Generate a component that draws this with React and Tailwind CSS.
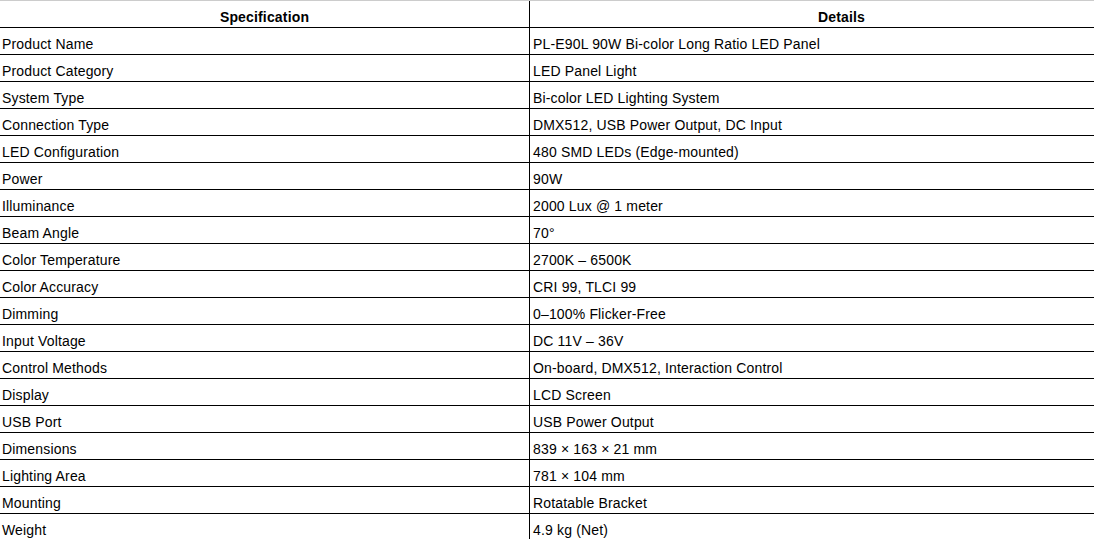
import React from 'react';

const specs = [
  ['Product Name', 'PL-E90L 90W Bi-color Long Ratio LED Panel'],
  ['Product Category', 'LED Panel Light'],
  ['System Type', 'Bi-color LED Lighting System'],
  ['Connection Type', 'DMX512, USB Power Output, DC Input'],
  ['LED Configuration', '480 SMD LEDs (Edge-mounted)'],
  ['Power', '90W'],
  ['Illuminance', '2000 Lux @ 1 meter'],
  ['Beam Angle', '70°'],
  ['Color Temperature', '2700K – 6500K'],
  ['Color Accuracy', 'CRI 99, TLCI 99'],
  ['Dimming', '0–100% Flicker-Free'],
  ['Input Voltage', 'DC 11V – 36V'],
  ['Control Methods', 'On-board, DMX512, Interaction Control'],
  ['Display', 'LCD Screen'],
  ['USB Port', 'USB Power Output'],
  ['Dimensions', '839 × 163 × 21 mm'],
  ['Lighting Area', '781 × 104 mm'],
  ['Mounting', 'Rotatable Bracket'],
  ['Weight', '4.9 kg (Net)'],
];

const App = () => {
  return (
    <div className="w-full h-[539px] overflow-hidden bg-white text-[14px] leading-[16px] tracking-[0.16px] text-black" style={{ fontFamily: '"Liberation Sans", Arial, sans-serif' }}>
      <div className="w-[1153px] border-t border-[#cccccc]">
        {/* header */}
        <div className="flex h-[27px] border-b border-black font-bold">
          <div className="w-[530px] border-r border-black flex justify-center pt-[8px]">Specification</div>
          <div className="flex-1 flex justify-center pt-[8px]">Details</div>
        </div>

        {specs.map(([label, value]) => (
          <div key={label} className="flex h-[27px] border-b border-black">
            <div className="w-[530px] border-r border-black pl-[2px] pt-[8px]">{label}</div>
            <div className="flex-1 pl-[3px] pt-[8px]">{value}</div>
          </div>
        ))}
      </div>
    </div>
  );
};

export default App;
